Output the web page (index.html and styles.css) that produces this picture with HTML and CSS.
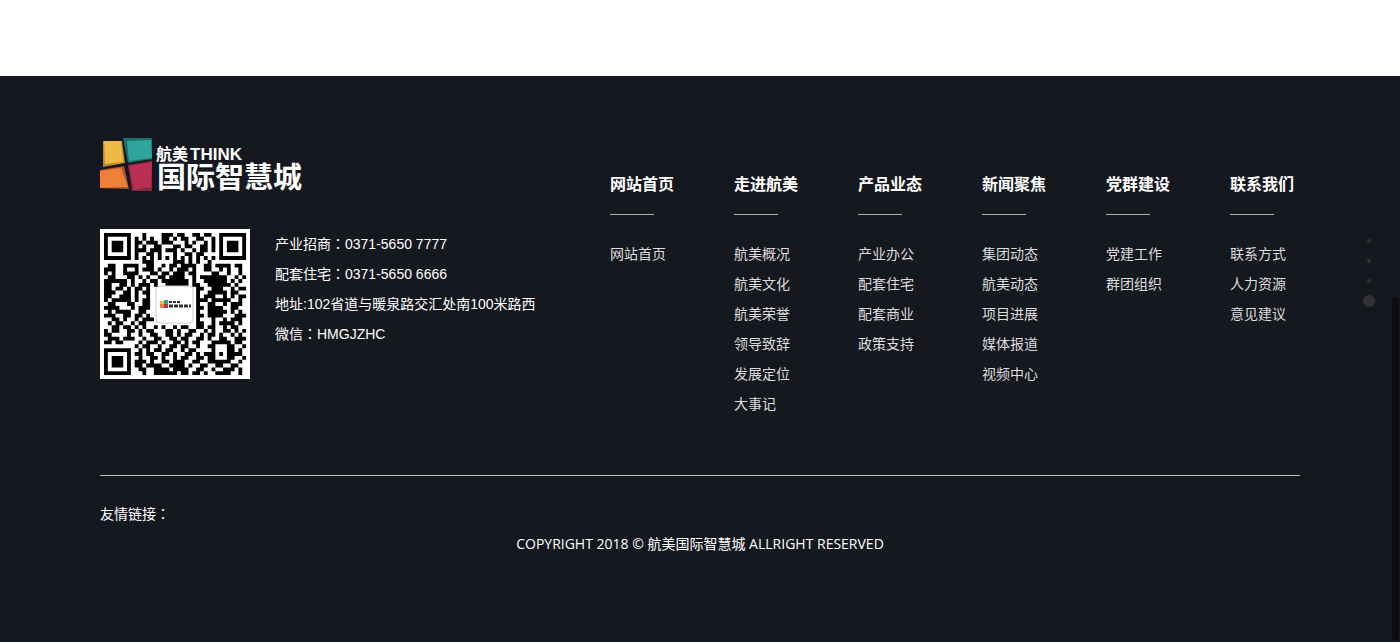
FILE: index.html
```
<!DOCTYPE html>
<html lang="zh-CN">
<head>
<meta charset="utf-8">
<title>航美国际智慧城</title>
<link rel="stylesheet" href="styles.css">
</head>
<body>

<!-- footer -->
<footer class="footer">
<div class="wrap">

<div class="footer-top">
    <div class="footer-left">
        <a class="logo" href="#">
            <svg width="220" height="64" viewBox="0 0 220 64" role="img" aria-label="航美THINK国际智慧城">
                <path fill="#b98a35" d="M3 3L22 3L25 25L3 29Z"/>
                <path fill="#efb943" d="M4 3L21 3L23 24L5 26Z"/>
                <path fill="#1f7069" d="M23 0L52 0L52 21L28 25Z"/>
                <path fill="#2fa69b" d="M27 3L51 2L52 20L29 23Z"/>
                <path fill="#a9582d" d="M0 32L24 28L29 51L0 50Z"/>
                <path fill="#f07f38" d="M0 33L21 30L28 49L0 50Z"/>
                <path fill="#852944" d="M28 27L52 23L52 53L32 53Z"/>
                <path fill="#b93052" d="M29 28L52 24L51 49L34 52Z"/>
                <text class="logo-cn" x="56" y="22">航美</text>
                <text class="logo-en" x="90" y="22">THINK</text>
                <text class="logo-big" x="57" y="50">国际智慧城</text>
            </svg>
        </a>
        <div class="contact">
            <svg class="qr" viewBox="0 0 150 150" role="img" aria-label="微信二维码">
                <rect width="150" height="150" fill="#fff"/>
                <path id="qr_path" fill="#000" transform="translate(4 4) scale(3.84)"/>
                <rect x="56" y="57" width="37" height="37" rx="4" fill="#fff" stroke="#ccc"/>
                <path fill="#efb943" d="M60 72h4v3h-4z"/>
                <path fill="#2fa69b" d="M64 71h4v4h-4z"/>
                <path fill="#f07f38" d="M60 75h4v4h-4z"/>
                <path fill="#b93052" d="M64 75h4v4h-4z"/>
                <path stroke="#333" stroke-width="2" stroke-dasharray="3 1" d="M69 73h12"/>
                <path stroke="#333" stroke-width="3" stroke-dasharray="4 1" d="M69 77h22"/>
            </svg>
            <ul class="contact-list">
                <li>产业招商<span class="colon">：</span>0371-5650 7777</li>
                <li>配套住宅<span class="colon">：</span>0371-5650 6666</li>
                <li>地址:102省道与暖泉路交汇处南100米路西</li>
                <li>微信<span class="colon">：</span>HMGJZHC</li>
            </ul>
        </div>
    </div>

    <nav class="footer-nav">
        <dl>
            <dt><a href="#">网站首页</a></dt>
            <dd><a href="#">网站首页</a></dd>
        </dl>
        <dl>
            <dt><a href="#">走进航美</a></dt>
            <dd><a href="#">航美概况</a></dd>
            <dd><a href="#">航美文化</a></dd>
            <dd><a href="#">航美荣誉</a></dd>
            <dd><a href="#">领导致辞</a></dd>
            <dd><a href="#">发展定位</a></dd>
            <dd><a href="#">大事记</a></dd>
        </dl>
        <dl>
            <dt><a href="#">产品业态</a></dt>
            <dd><a href="#">产业办公</a></dd>
            <dd><a href="#">配套住宅</a></dd>
            <dd><a href="#">配套商业</a></dd>
            <dd><a href="#">政策支持</a></dd>
        </dl>
        <dl>
            <dt><a href="#">新闻聚焦</a></dt>
            <dd><a href="#">集团动态</a></dd>
            <dd><a href="#">航美动态</a></dd>
            <dd><a href="#">项目进展</a></dd>
            <dd><a href="#">媒体报道</a></dd>
            <dd><a href="#">视频中心</a></dd>
        </dl>
        <dl>
            <dt><a href="#">党群建设</a></dt>
            <dd><a href="#">党建工作</a></dd>
            <dd><a href="#">群团组织</a></dd>
        </dl>
        <dl>
            <dt><a href="#">联系我们</a></dt>
            <dd><a href="#">联系方式</a></dd>
            <dd><a href="#">人力资源</a></dd>
            <dd><a href="#">意见建议</a></dd>
        </dl>
    </nav>
</div>

<div class="footer-bottom">
    <p class="links">友情链接<span class="colon">：</span></p>
    <p class="copyright">COPYRIGHT 2018 © 航美国际智慧城 ALLRIGHT RESERVED</p>
</div>

</div>
</footer>

<!-- section dots -->
<div class="dots">
    <a href="#"></a>
    <a href="#"></a>
    <a href="#"></a>
    <a href="#" class="active"></a>
</div>

<div class="scroll-thumb"></div>

<script type="text/javascript">
// one string per row, # is a dark module
var rows = [
    "#######...#....###.##..##.##..#######",
    "#.....#.#.#.#..##.#.##..##..#.#.....#",
    "#.###.#.##.###.###...#.#..#.#.#.###.#",
    "#.###.#.#.#..##...##.##..##.#.#.###.#",
    "#.###.#.###.###.###.#..#.##.#.#.###.#",
    "#.....#.#..##.#...#..##.##....#.....#",
    "#######.#.#.#.#.#.#.#.#.#.#.#.#######",
    "..........###.....###.#.#..#.........",
    ".##..####..##..#.##.####..##.####.##.",
    "###..#..#.###.#..#.###.#..##..#.#..#.",
    "#.#..####...##.##.###.##....##..#..#.",
    ".##...##.#.#..##.####..#.#######..#.#",
    "######.#..#.##.#######.#..######.#.#.",
    "##..##.#.###.#..######.##..######.#..",
    "##.##.#.##.#............##..###..#.##",
    "###..##.#.##............#..#####.##..",
    "##..###.#..#............#.###..#.#.##",
    "#.#####.#.##............###.#####..#.",
    ".##...##..##............#..##..#.###.",
    "####...#.###............##.####..##..",
    ".#.####..##.............#..#####.#.#.",
    "###..##.##.#............##.####...###",
    "..##.#..#.###...........#...#..#.###.",
    ".#.##..#.##.............##..#.####.#.",
    "..##.##.#.#..#.#..#.##..##.##..#.##..",
    "#.##..##.#.##...##.#..##..#.#..##.#.#",
    "##....#..#..##..##.#.##..#.##.#..#.#.",
    ".###.###..#..##..##.##..##.#..##..###",
    "##.##....#.###.#..##.#.##...#####.##.",
    "........#.##..#..##.##..#..##...##..#",
    "#######..#.#.##.##..#.##....#...##.#.",
    "#.....#.##.##..##.#..##.#.###.#.####.",
    "#.###.#..#..##.#..#.##..##.##...##..#",
    "#.###.#.###.#..##.###..##..######..#.",
    "#.###.#.##.####..####.#..##..##..##..",
    "#.....#..##..####.####..##..#..###.#.",
    "#######...#..######.##.##.#..####..#."
]

var d = ""
for (var y=0; y<rows.length; y++) {
    for (var x=0; x<rows[y].length; x++) {
        if (rows[y].charAt(x) == "#")
            d += "M" + x + " " + y + "h1v1h-1z"
    }
}
document.getElementById("qr_path").setAttribute("d", d)
</script>
</body>
</html>
```
FILE: styles.css
```
* {
    margin:             0;
    padding:            0;
    box-sizing:         border-box;
}

body {
    font-family:        "Liberation Sans", "Noto Sans CJK SC", sans-serif;
    font-size:          14px;
    line-height:        30px;
    color:              #fff;
    background:         #fff;
    padding-top:        76px;
}

ul {
    list-style:         none;
}

a {
    color:              inherit;
    text-decoration:    none;
}

/* footer */
.footer {
    background:         #16181f;
    padding:            62px 20px 83px;
}

.wrap {
    max-width:          1200px;
    margin:             0 auto;
}

.footer-top {
    display:            flex;
    justify-content:    space-between;
    padding:            0 6px 56px 0;
    border-bottom:      1px solid #bbb;
}

.logo, .logo svg {
    display:            block;
}

.logo text {
    fill:               #fff;
    font-weight:        bold;
}

.logo-cn {
    font-size:          16px;
}

.logo-en {
    font-size:          17px;
}

.logo-big {
    font-size:          29px;
}

.contact {
    display:            flex;
    gap:                25px;
    margin-top:         27px;
}

.qr {
    display:            block;
    width:              150px;
    height:             150px;
}

/* centred full-width colon */
.colon {
    font-family:        "Noto Sans CJK TC", sans-serif;
    font-feature-settings: "locl" 0;
    line-height:        1;
}

/* footer menu */
.footer-nav {
    display:            flex;
    gap:                60px;
    padding-top:        32px;
}

.footer-nav dt {
    font-size:          16px;
    font-weight:        bold;
    margin-bottom:      24px;
}

.footer-nav dt:after {
    content:            "";
    display:            block;
    width:              44px;
    height:             1px;
    margin-top:         14px;
    background:         #aaa;
}

.footer-nav dd {
    color:              #ddd;
}

/* footer bottom */
.footer-bottom {
    padding-top:        23px;
}

.copyright {
    font-family:        "Open Sans", "Noto Sans CJK SC", sans-serif;
    text-align:         center;
}

/* dots on the right */
.dots {
    position:           fixed;
    top:                231px;
    right:              21px;
    width:              20px;
}

.dots a {
    display:            flex;
    align-items:        center;
    justify-content:    center;
    height:             20px;
}

.dots a:after {
    content:            "";
    width:              4px;
    height:             4px;
    border-radius:      50%;
    background:         #333;
}

.dots .active:after {
    width:              12px;
    height:             12px;
}

.scroll-thumb {
    position:           fixed;
    top:                297px;
    right:              1px;
    bottom:             2px;
    width:              7px;
    border-radius:      4px;
    background:         #0b0c10;
}
```
